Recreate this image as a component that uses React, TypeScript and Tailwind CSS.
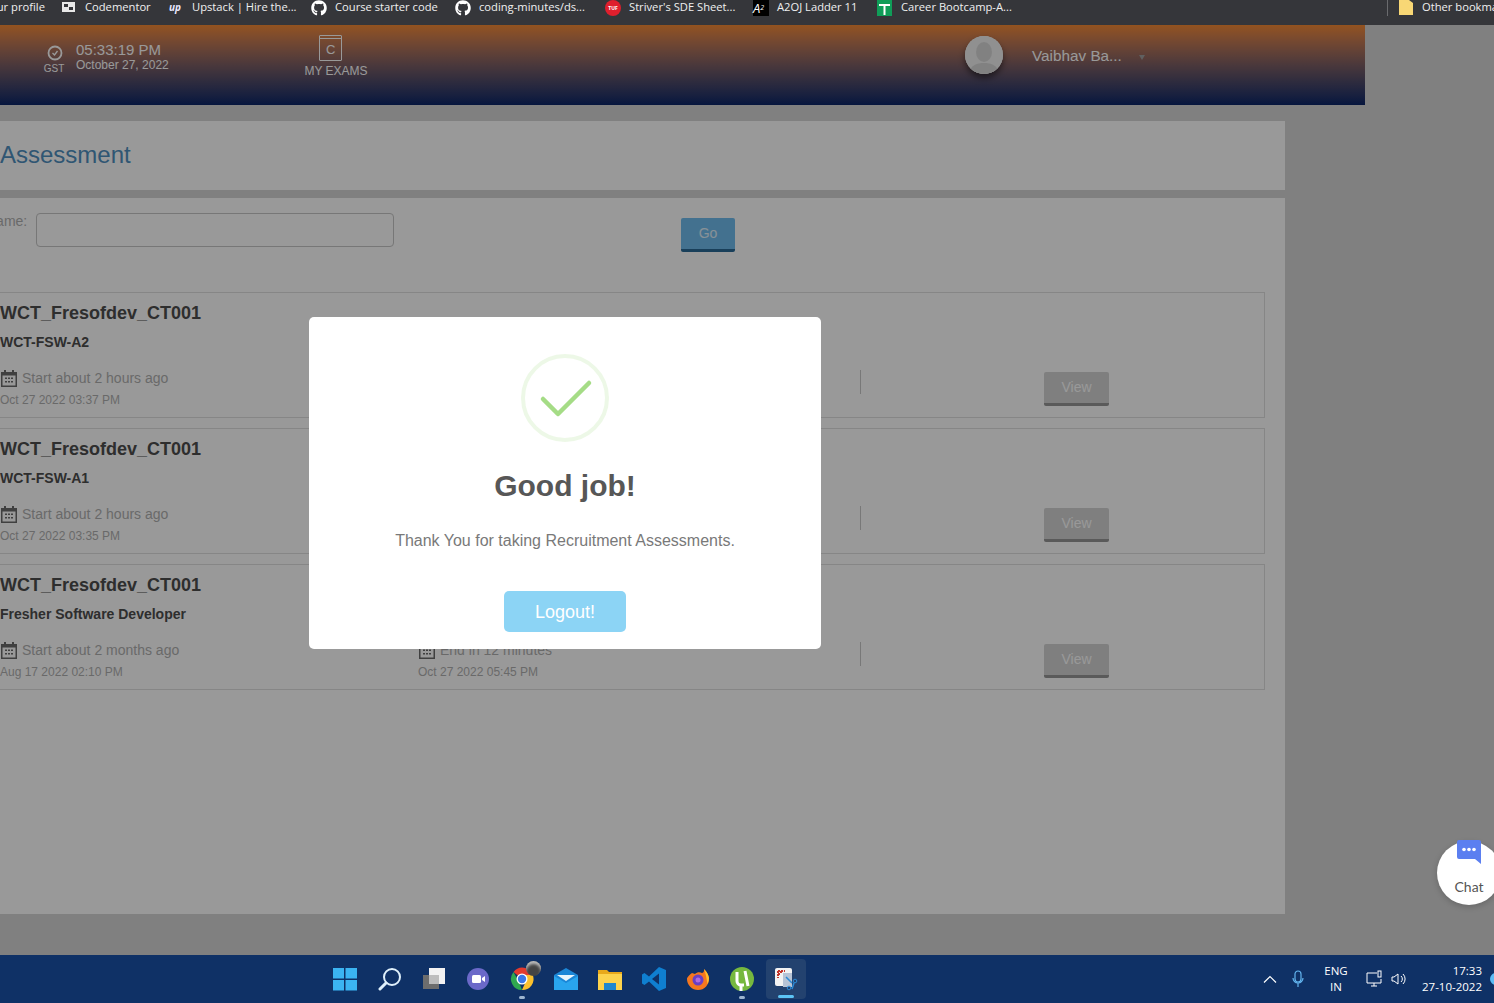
import { FaGithub } from "react-icons/fa";

const exams = [
  { sub: "WCT-FSW-A2", start: "Start about 2 hours ago", startDate: "Oct 27 2022 03:37 PM" },
  { sub: "WCT-FSW-A1", start: "Start about 2 hours ago", startDate: "Oct 27 2022 03:35 PM" },
  { sub: "Fresher Software Developer", start: "Start about 2 months ago", startDate: "Aug 17 2022 02:10 PM", end: "End in 12 minutes", endDate: "Oct 27 2022 05:45 PM" },
];

type Exam = { sub: string; start: string; startDate: string; end?: string; endDate?: string };

function CalendarIcon() {
  return (
    <svg width="16" height="17" viewBox="0 0 16 17" className="ml-[1px] shrink-0 text-[#6b6b6b]">
      <path fill="currentColor" d="M3 0h2v2h6V0h2v2h3v15H0V2h3zM1.500 5.500v10h13v-10z" />
      <path fill="currentColor" d="M4 7.500h2V9H4zM7 7.500h2V9H7zM10 7.500h2V9h-2zM4 11h2v1.500H4zM7 11h2v1.500H7zM10 11h2v1.500h-2z" />
    </svg>
  );
}

function ExamCard({ exam }: { exam: Exam }) {
  return (
    <div className="-ml-[21px] h-[126px] w-[1286px] border border-[#e0e0e0] pl-5">
      <div className="pt-[8px] text-[18px] leading-[24px] font-bold text-[#4d4d4d]">WCT_Fresofdev_CT001</div>
      <div className="mt-[7px] text-[14px] leading-[20px] font-bold text-[#4d4d4d]">{exam.sub}</div>
      <div className="mt-[16px] flex">
        <div className="w-[418px]">
          <div className="flex h-[20px] items-center gap-[5px] text-[14px] text-[#b0b0b0]">
            <CalendarIcon />
            {exam.start}
          </div>
          <div className="mt-[4px] text-[12px] leading-[16px] text-[#b0b0b0]">{exam.startDate}</div>
        </div>
        <div className="w-[442px]">
          {exam.end && (
            <>
              <div className="flex h-[20px] items-center gap-[5px] text-[14px] text-[#b0b0b0]">
                <CalendarIcon />
                {exam.end}
              </div>
              <div className="mt-[4px] text-[12px] leading-[16px] text-[#b0b0b0]">{exam.endDate}</div>
            </>
          )}
        </div>
        <div className="mt-[2px] h-[24px] w-px bg-[#c8c8c8]" />
        <button className="mt-[4px] ml-[183px] h-[34px] w-[65px] rounded-[2px] border-b-[3px] border-[#969696] bg-[#d4d4d4] text-[14px] text-white">
          View
        </button>
      </div>
    </div>
  );
}

function BookmarkBar() {
  return (
    <div className="flex h-[25px] items-start overflow-hidden bg-[#35363a] text-[11.200px] leading-[14px] whitespace-nowrap text-[#f0f0f0] [font-family:'Open_Sans',sans-serif]">
      <span className="-ml-[10px] w-[72px] shrink-0">our profile</span>
      <svg width="14" height="14" viewBox="0 0 14 14" className="mr-[9px] shrink-0">
        <rect y="2" width="13" height="10" fill="#e8e8e8" />
        <rect x="2" y="4" width="4" height="3" fill="#35363a" />
        <rect x="7" y="7" width="4" height="3" fill="#35363a" />
      </svg>
      <span className="w-[84px] shrink-0">Codementor</span>
      <span className="mr-[9px] w-[14px] shrink-0 text-[10px] font-bold italic text-[#e8e8ff]">up</span>
      <span className="w-[119px] shrink-0">Upstack | Hire the...</span>
      <FaGithub className="mr-[8px] size-[16px] shrink-0 text-white" />
      <span className="w-[120px] shrink-0">Course starter code</span>
      <FaGithub className="mr-[8px] size-[16px] shrink-0 text-white" />
      <span className="w-[126px] shrink-0">coding-minutes/ds...</span>
      <span className="mr-[8px] size-[16px] shrink-0 rounded-full bg-[#df1f2d] text-center text-[5px] leading-[16px] font-bold text-white">TUF</span>
      <span className="w-[124px] shrink-0">Striver's SDE Sheet...</span>
      <span className="mr-[8px] h-[16px] w-[16px] shrink-0 bg-black text-[13px] leading-[16px] text-white italic">
        A<sup className="text-[7px]">2</sup>
      </span>
      <span className="w-[100px] shrink-0">A2OJ Ladder 11</span>
      <svg width="15" height="16" viewBox="0 0 15 16" className="mr-[9px] shrink-0">
        <rect width="15" height="16" fill="#0f9d58" />
        <path d="M2 4h11v2H8.500v9h-2V6H2z" fill="#fff" />
      </svg>
      <span className="w-[486px] shrink-0">Career Bootcamp-A...</span>
      <div className="mr-[11px] h-[16px] w-px shrink-0 bg-[#6a6b6e]" />
      <svg width="14" height="15" viewBox="0 0 14 15" className="mr-[9px] shrink-0">
        <path d="M0 0h10l4 3v12H0z" fill="#f8d775" />
      </svg>
      <span className="shrink-0">Other bookmarks</span>
    </div>
  );
}

function AppHeader() {
  return (
    <header className="flex h-20 w-[1365px] bg-gradient-to-b from-[#f58a34] to-[#0b2568] text-white">
      <div className="ml-[43px] w-[22px] pt-[20px] text-center">
        <svg width="16" height="16" viewBox="0 0 16 16" fill="none" stroke="#fff" className="mx-auto translate-x-[1px]">
          <circle cx="8" cy="8" r="6.500" strokeWidth="1.800" />
          <path d="M5.500 8l2 2 3-4" strokeWidth="1.300" />
        </svg>
        <div className="mt-[2px] text-[10px] leading-[11px]">GST</div>
      </div>
      <div className="ml-[11px] w-[228px] pt-[16px]">
        <div className="text-[15px] leading-[18px]">05:33:19 PM</div>
        <div className="text-[12px] leading-[13px]">October 27, 2022</div>
      </div>
      <div className="w-[64px] pt-[10px] text-center">
        <div className="relative mx-auto -ml-[-15px] h-[26px] w-[23px] rounded-[1px] border border-[#fff] text-left">
          <div className="absolute top-[2px] right-0 left-0 h-px bg-white" />
          <span className="absolute top-[6px] left-[6px] text-[13px] leading-[15px]">C</span>
        </div>
        <div className="mt-[3px] text-[12px] leading-[14px] whitespace-nowrap">MY EXAMS</div>
      </div>
      <div className="ml-[597px] flex h-[38px] w-[38px] translate-y-[11px] items-end justify-center overflow-hidden rounded-full bg-[#fff] shadow-[0_4px_6px_rgba(0,0,0,0.5)]">
        <svg width="38" height="38" viewBox="0 0 38 38">
          <rect width="38" height="38" fill="#f0f0f0" />
          <ellipse cx="19" cy="16" rx="8" ry="10" fill="#d8d8d8" />
          <path d="M4 38c1-9 8-11 15-11s14 2 15 11z" fill="#d8d8d8" />
        </svg>
      </div>
      <div className="ml-[29px] pt-[21px] text-[15.300px] leading-[20px]">Vaibhav Ba...</div>
      <div className="mt-[30px] ml-[17px] h-0 w-0 border-x-[3.500px] border-t-[5px] border-x-transparent border-t-[#a0a0a0]" />
    </header>
  );
}

function SuccessModal() {
  return (
    <div className="absolute top-[292px] left-[309px] flex h-[332px] w-[512px] flex-col items-center rounded-[5px] bg-white pt-[37px]">
      <svg width="88" height="88" viewBox="0 0 88 88" fill="none">
        <circle cx="44" cy="44" r="42" stroke="#a5dc86" strokeOpacity="0.2" strokeWidth="4" />
        <path d="M22 45l15 15 31-31" stroke="#a5dc86" strokeWidth="4.500" strokeLinecap="round" strokeLinejoin="round" />
      </svg>
      <h2 className="mt-[24px] text-[30px] leading-[40px] font-bold text-[#575757]">Good job!</h2>
      <p className="mt-[25px] text-[16px] leading-[20px] text-[#797979]">Thank You for taking Recruitment Assessments.</p>
      <button className="mt-[40px] h-[41px] w-[122px] rounded-[5px] bg-[#8cd4f5] pt-[1px] text-[18px] text-white">Logout!</button>
    </div>
  );
}

function ChatWidget() {
  return (
    <div className="absolute top-[816px] right-[-7px] flex size-[64px] flex-col items-center rounded-full bg-white shadow-[0_2px_6px_rgba(0,0,0,0.2)] [font-family:'Lato',sans-serif]">
      <svg width="24" height="24" viewBox="0 0 24 24" className="-mt-[1px]">
        <path d="M2 0h20a2 2 0 0 1 2 2v22l-6-5H2a2 2 0 0 1-2-2V2a2 2 0 0 1 2-2z" fill="#5b7ff0" />
        <circle cx="7" cy="9.500" r="1.800" fill="#fff" />
        <circle cx="12" cy="9.500" r="1.800" fill="#fff" />
        <circle cx="17" cy="9.500" r="1.800" fill="#fff" />
      </svg>
      <span className="mt-[15px] text-[14px] leading-[16px] text-[#555]">Chat</span>
    </div>
  );
}

function TaskbarIcons() {
  return (
    <div className="ml-[323px] flex items-center">
      <div className="flex size-[44px] items-center justify-center">
        <svg width="24" height="24" viewBox="0 0 24 24">
          <path d="M0 1h11v10.500H0zM12.500 1H24v10.500H12.500zM0 13h11v10.500H0zM12.500 13H24v10.500H12.500z" fill="#3bb4f2" />
        </svg>
      </div>
      <div className="ml-[1px] flex size-[44px] items-center justify-center">
        <svg width="24" height="24" viewBox="0 0 24 24" fill="none" stroke="#dff0fb" strokeWidth="2">
          <circle cx="14" cy="10" r="8" />
          <path d="M8 16l-6 6" strokeWidth="3" strokeLinecap="round" />
        </svg>
      </div>
      <div className="flex size-[44px] items-center justify-center">
        <svg width="24" height="24" viewBox="0 0 24 24">
          <rect x="7" y="1" width="16" height="16" fill="#f2f2f2" />
          <rect x="1" y="8" width="16" height="14" fill="#6d6d6d" />
          <rect x="7" y="8" width="10" height="9" fill="#bdbdbd" />
        </svg>
      </div>
      <div className="flex size-[44px] items-center justify-center">
        <svg width="24" height="24" viewBox="0 0 24 24">
          <circle cx="12" cy="12" r="11" fill="#6b69c9" />
          <rect x="6" y="8" width="9" height="8" rx="1.500" fill="#fff" />
          <path d="M16 11l3-2v6l-3-2z" fill="#fff" />
        </svg>
      </div>
      <div className="relative flex size-[44px] items-center justify-center">
        <svg width="24" height="24" viewBox="0 0 24 24">
          <path d="M12 12L3.500 5A11 11 0 0 1 22.800 8H12z" fill="#e33b2e" />
          <path d="M12 23A11 11 0 0 1 3.500 5L9 15z" fill="#2fa84f" />
          <path d="M12 23A11 11 0 0 0 22.800 8H15l1 6z" fill="#fbc02d" />
          <circle cx="12" cy="12" r="5.500" fill="#fff" />
          <circle cx="12" cy="12" r="4.200" fill="#3b78e7" />
        </svg>
        <span className="absolute top-[4px] right-[3px] size-[15px] rounded-full bg-[#444] shadow-[inset_0_3px_3px_#bbb]" />
        <span className="absolute bottom-[2px] h-[3px] w-[6px] rounded-full bg-[#9db5cf]" />
      </div>
      <div className="flex size-[44px] items-center justify-center">
        <svg width="24" height="24" viewBox="0 0 24 24">
          <path d="M0 8l12-7 12 7v15H0z" fill="#1b86d6" />
          <path d="M3 8h18l-9 6z" fill="#e8f5fc" />
          <path d="M0 9l12 7 12-7v14H0z" fill="#29a5ee" />
        </svg>
      </div>
      <div className="flex size-[44px] items-center justify-center">
        <svg width="24" height="24" viewBox="0 0 24 24">
          <path d="M0 3h9l2 2h13v18H0z" fill="#e8a91b" />
          <rect y="7" width="24" height="16" fill="#fcd34d" />
          <rect x="6" y="16" width="12" height="7" fill="#1e88d0" />
        </svg>
      </div>
      <div className="flex size-[44px] items-center justify-center">
        <svg width="24" height="24" viewBox="0 0 24 24">
          <path d="M17 0l7 3v18l-7 3-10-9.500L2.500 18 0 16.500V7.500L2.500 6 7 9.500z" fill="#0f7fd0" />
          <path d="M17 6.500v11L10 12z" fill="#0f3166" />
        </svg>
      </div>
      <div className="flex size-[44px] items-center justify-center">
        <svg width="24" height="24" viewBox="0 0 24 24">
          <path d="M12 23a11 11 0 0 0 11-12c-.500-3-2-6-5-9 .500 3-1 4-2 4-2-1-5-1-7 1l-3-1C2 9 1 11 1 12a11 11 0 0 0 11 11z" fill="#f5771f" />
          <path d="M18 2c3 3 4.500 6 5 9 0 2-.500 4-1.500 6-1-5-1.500-10-3.500-15z" fill="#ffc02c" />
          <circle cx="12" cy="13" r="5.500" fill="#6a3fc4" />
          <circle cx="12" cy="13" r="2.500" fill="#b06be0" />
        </svg>
      </div>
      <div className="relative flex size-[44px] items-center justify-center">
        <svg width="24" height="24" viewBox="0 0 24 24">
          <circle cx="12" cy="12" r="12" fill="#76b83f" />
          <path d="M7 5v9a4 4 0 0 0 4 4h3" fill="none" stroke="#fff" strokeWidth="3" />
          <path d="M15 4l3 15M11 24V18" stroke="#fff" strokeWidth="3" />
        </svg>
        <span className="absolute bottom-[2px] h-[3px] w-[6px] rounded-full bg-[#9db5cf]" />
      </div>
      <div className="relative ml-[2px] flex h-[40px] w-[40px] items-center justify-center rounded-[4px] bg-[#23426f]">
        <svg width="24" height="24" viewBox="0 0 24 24">
          <rect x="1" y="1" width="17" height="18" rx="2" fill="#f3f3f3" />
          <path d="M4 4h7M4 4v7M4 7h2M7 4v3" stroke="#c4362b" strokeWidth="2" strokeDasharray="2 1" fill="none" />
          <rect x="9" y="6" width="9" height="14" fill="#b7c4d6" />
          <path d="M12 10l6 6M18 22l2-6" stroke="#2c8bd6" strokeWidth="1.500" />
          <circle cx="21" cy="14" r="1.800" fill="none" stroke="#2c8bd6" />
          <circle cx="15" cy="21" r="1.800" fill="none" stroke="#2c8bd6" />
        </svg>
        <span className="absolute bottom-[1px] h-[3px] w-[16px] rounded-full bg-[#5cc4f5]" />
      </div>
    </div>
  );
}

function SystemTray() {
  return (
    <div className="ml-auto flex h-full items-center text-[11.500px] leading-[16px] text-white [font-family:'Open_Sans',sans-serif]">
      <svg width="14" height="8" viewBox="0 0 14 8" fill="none" stroke="#fff" strokeWidth="1.200">
        <path d="M1 7.500L7 1.500l6 6" />
      </svg>
      <svg width="12" height="18" viewBox="0 0 12 18" fill="none" stroke="#63b5ef" strokeWidth="1.200" className="ml-[15px]">
        <rect x="3" y="1" width="6" height="11" rx="3" />
        <path d="M1 8a5 5 0 0 0 10 0M6 13v4" />
      </svg>
      <div className="ml-[14px] w-[36px] text-center">
        <div>ENG</div>
        <div>IN</div>
      </div>
      <svg width="18" height="18" viewBox="0 0 18 18" fill="none" stroke="#fff" className="ml-[12px]">
        <path d="M11 3H1v10h14V9M5 16h6M8 13v3" />
        <rect x="12" y="1" width="3" height="6" />
      </svg>
      <svg width="16" height="16" viewBox="0 0 16 16" fill="none" stroke="#fff" className="ml-[7px]">
        <path d="M1 6v4h2l4 3V3L3 6zM10 5a4 4 0 0 1 0 6M12 3a7 7 0 0 1 0 10" />
      </svg>
      <div className="ml-[13px] w-[62px] text-right">
        <div>17:33</div>
        <div className="whitespace-nowrap">27-10-2022</div>
      </div>
      <span className="ml-[8px] -mr-[8px] size-[12px] rounded-full bg-[#5cbcf5]" />
    </div>
  );
}

export default function App() {
  return (
    <div className="flex h-[1003px] w-[1494px] flex-col overflow-hidden [font-family:'Liberation_Sans',Arial,sans-serif]">
      <BookmarkBar />
      <div className="relative h-[930px] overflow-hidden bg-[#d5d5d5]">
        <AppHeader />
        <main className="mt-4 w-[1285px]">
          <div className="flex h-[69px] items-center bg-white pb-[2px] text-[24px] text-[#4f8fc0]">Assessment</div>
          <div className="mt-2 h-[716px] bg-white">
            <div className="flex pt-[15px]">
              <span className="-mt-[2px] -ml-[14px] w-[50px] text-[14px] text-[#b0b0b0]">Name:</span>
              <div className="h-[34px] w-[358px] rounded-[4px] border border-[#c6c6c6] bg-white" />
              <button className="mt-[5px] ml-[287px] h-[34px] w-[54px] rounded-[2px] border-b-[3px] border-[#2a6a96] bg-[#70bdee] text-[14px] text-white/80">Go</button>
            </div>
            <div className="mt-[40px] flex flex-col gap-[10px]">
              {exams.map((exam) => (
                <ExamCard key={exam.sub} exam={exam} />
              ))}
            </div>
          </div>
        </main>
        <div className="absolute inset-0 bg-black/40" />
        <SuccessModal />
        <ChatWidget />
      </div>
      <div className="flex h-[48px] items-center bg-[#0f3166]">
        <TaskbarIcons />
        <SystemTray />
      </div>
    </div>
  );
}
